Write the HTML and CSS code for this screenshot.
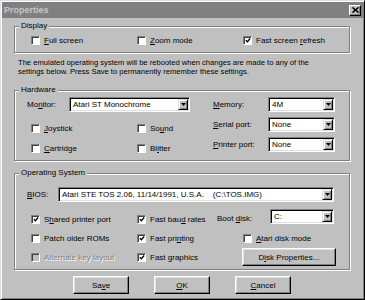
FILE: index.html
```html
<!DOCTYPE html>
<html lang="en">
<head>
  <meta charset="UTF-8">
  <title>Properties</title>
  <link rel="stylesheet" href="styles.css">
</head>
<body>
  <div class="window">
    <div class="titlebar">
      <span class="title">Properties</span>
      <button class="close-btn">
        <svg width="7" height="6" viewBox="0 0 7 6"><path d="M0.5 0.5L6.5 5.5M6.5 0.5L0.5 5.5" stroke="#000" stroke-width="1.6"/></svg>
      </button>
    </div>

    <div class="content">
      <fieldset class="group display">
        <legend>Display</legend>
        <div class="display-body">
          <label class="check"><span class="box"></span><span><u>F</u>ull screen</span></label>
          <label class="check"><span class="box"></span><span><u>Z</u>oom mode</span></label>
          <label class="check"><span class="box"><svg width="7" height="7" viewBox="0 0 7 7"><path d="M1 3.2L2.8 5L6 1.2" fill="none" stroke="#000" stroke-width="1.5"/></svg></span><span>Fast screen <u>r</u>efresh</span></label>
        </div>
      </fieldset>

      <p class="notice">The emulated operating system will be rebooted when changes are made to any of the<br>settings below. Press Save to permanently remember these settings.</p>

      <fieldset class="group hardware">
        <legend>Hardware</legend>
        <div class="hw-body">
          <div class="hw-left">
            <div class="monitor-row">
              <span class="monitor-label">Mo<u>n</u>itor:</span>
              <div class="select monitor-select">
                <span class="select-value">Atari ST Monochrome</span>
                <span class="select-arrow"><svg width="5" height="3" viewBox="0 0 5 3"><path d="M0 0H5L2.5 3Z" fill="#000"/></svg></span>
              </div>
            </div>
            <div class="hw-checks">
              <label class="check"><span class="box"></span><span><u>J</u>oystick</span></label>
              <label class="check"><span class="box"></span><span>So<u>u</u>nd</span></label>
              <label class="check"><span class="box"></span><span><u>C</u>artridge</span></label>
              <label class="check"><span class="box"></span><span>Bl<u>i</u>tter</span></label>
            </div>
          </div>
          <div class="hw-right">
            <span class="field-label"><u>M</u>emory:</span>
            <div class="select">
              <span class="select-value">4M</span>
              <span class="select-arrow"><svg width="5" height="3" viewBox="0 0 5 3"><path d="M0 0H5L2.5 3Z" fill="#000"/></svg></span>
            </div>
            <span class="field-label"><u>S</u>erial port:</span>
            <div class="select">
              <span class="select-value">None</span>
              <span class="select-arrow"><svg width="5" height="3" viewBox="0 0 5 3"><path d="M0 0H5L2.5 3Z" fill="#000"/></svg></span>
            </div>
            <span class="field-label"><u>P</u>rinter port:</span>
            <div class="select">
              <span class="select-value">None</span>
              <span class="select-arrow"><svg width="5" height="3" viewBox="0 0 5 3"><path d="M0 0H5L2.5 3Z" fill="#000"/></svg></span>
            </div>
          </div>
        </div>
      </fieldset>

      <fieldset class="group os">
        <legend>Operating System</legend>
        <div class="os-body">
          <div class="bios-row">
            <span class="bios-label"><u>B</u>IOS:</span>
            <div class="select bios-select">
              <span class="select-value">Atari STE TOS 2.06, 11/14/1991, U.S.A.&nbsp;&nbsp;&nbsp;&nbsp;(C:\TOS.IMG)</span>
              <span class="select-arrow"><svg width="5" height="3" viewBox="0 0 5 3"><path d="M0 0H5L2.5 3Z" fill="#000"/></svg></span>
            </div>
          </div>

          <div class="os-row row-boot">
            <label class="check col-a"><span class="box"><svg width="7" height="7" viewBox="0 0 7 7"><path d="M1 3.2L2.8 5L6 1.2" fill="none" stroke="#000" stroke-width="1.5"/></svg></span><span>S<u>h</u>ared printer port</span></label>
            <label class="check col-b-short"><span class="box"><svg width="7" height="7" viewBox="0 0 7 7"><path d="M1 3.2L2.8 5L6 1.2" fill="none" stroke="#000" stroke-width="1.5"/></svg></span><span>Fast bau<u>d</u> rates</span></label>
            <span class="boot-label">Boot <u>d</u>isk:</span>
            <div class="select boot-select">
              <span class="select-value">C:</span>
              <span class="select-arrow"><svg width="5" height="3" viewBox="0 0 5 3"><path d="M0 0H5L2.5 3Z" fill="#000"/></svg></span>
            </div>
          </div>

          <div class="os-row row-mid">
            <label class="check col-a"><span class="box"></span><span>Patch older ROMs</span></label>
            <label class="check col-b"><span class="box"><svg width="7" height="7" viewBox="0 0 7 7"><path d="M1 3.2L2.8 5L6 1.2" fill="none" stroke="#000" stroke-width="1.5"/></svg></span><span>Fast pri<u>n</u>ting</span></label>
            <label class="check"><span class="box"></span><span><u>A</u>tari disk mode</span></label>
          </div>

          <div class="os-row row-last">
            <label class="check col-a disabled"><span class="box"></span><span>Alternate key layout</span></label>
            <label class="check col-b-wide"><span class="box"><svg width="7" height="7" viewBox="0 0 7 7"><path d="M1 3.2L2.8 5L6 1.2" fill="none" stroke="#000" stroke-width="1.5"/></svg></span><span>Fast graphics</span></label>
            <button class="button disk-btn">D<u>i</u>sk Properties...</button>
          </div>
        </div>
      </fieldset>

      <div class="actions">
        <button class="button">Sa<u>v</u>e</button>
        <button class="button"><u>O</u>K</button>
        <button class="button"><u>C</u>ancel</button>
      </div>
    </div>
  </div>
</body>
</html>
```

FILE: styles.css
```css
body {
  margin: 0;
  font-family: "Liberation Sans", Arial, sans-serif;
  font-size: 8px;
  color: #000;
  background-color: #c0c0c0;
}

.window {
  width: 365px;
  height: 300px;
  box-sizing: border-box;
  padding: 1px;
  background-color: #c0c0c0;
  border: 1px solid;
  border-color: #dfdfdf #000 #000 #dfdfdf;
  box-shadow: inset 1px 1px #fff, inset -1px -1px #808080;
}

.titlebar {
  height: 16px;
  background-color: #808080;
  display: flex;
  align-items: center;
  justify-content: space-between;
}

.title {
  padding-left: 2px;
  font-size: 9px;
  font-weight: bold;
  color: #c8c8c8;
}

.close-btn {
  width: 12px;
  height: 11px;
  margin-right: 2px;
  padding: 0;
  box-sizing: border-box;
  display: flex;
  align-items: center;
  justify-content: center;
  background-color: #c0c0c0;
  border: 1px solid;
  border-color: #fff #000 #000 #fff;
  box-shadow: inset -1px -1px #808080;
}

.content {
  padding: 0 13px 0 12px;
}

/* etched group boxes */
.group {
  margin: 0;
  padding: 0;
  min-width: 0;
  border: 1px solid #808080;
  box-shadow: inset 1px 1px #fff, 1px 1px #fff;
}

.group legend {
  margin-left: 4px;
  padding: 0 2px;
  line-height: 10px;
  background-color: #c0c0c0;
}

.display {
  margin-top: 3px;
}

.display-body {
  display: grid;
  grid-template-columns: 106px 106px auto;
  padding: 4px 0 7px 16px;
}

.check {
  display: flex;
  align-items: center;
  height: 10px;
  white-space: nowrap;
}

.box {
  width: 9px;
  height: 9px;
  box-sizing: border-box;
  margin-right: 4px;
  flex-shrink: 0;
  display: flex;
  align-items: center;
  justify-content: center;
  background-color: #fff;
  border: 1px solid;
  border-color: #808080 #fff #fff #808080;
  box-shadow: inset 1px 1px #404040;
}

.box svg {
  margin: 1px 0 0 1px;
}

.check.disabled {
  color: #808080;
  text-shadow: 1px 1px #fff;
}

.check.disabled .box {
  background-color: #c0c0c0;
}

.notice {
  margin: 5px 4px 0;
  font-size: 7.6px;
  line-height: 9px;
  white-space: nowrap;
}

.hardware {
  margin-top: 9px;
}

.hw-body {
  display: flex;
  padding: 2px 0 7px 12px;
}

.hw-left {
  width: 163px;
}

.monitor-row {
  display: flex;
  align-items: center;
}

.monitor-label {
  width: 42px;
}

.monitor-select {
  width: 121px;
}

.hw-checks {
  display: grid;
  grid-template-columns: 106px auto;
  row-gap: 10px;
  margin-top: 11px;
  padding-left: 4px;
}

.hw-right {
  margin-left: 23px;
  display: grid;
  grid-template-columns: 55px 67px;
  grid-auto-rows: 15px;
  row-gap: 5px;
  align-items: center;
}

/* sunken combo boxes */
.select {
  height: 15px;
  box-sizing: border-box;
  padding: 1px;
  display: flex;
  align-items: center;
  background-color: #fff;
  border: 1px solid;
  border-color: #808080 #fff #fff #808080;
  box-shadow: inset 1px 1px #000, inset -1px -1px #dfdfdf;
}

.select-value {
  flex: 1;
  padding-left: 2px;
  white-space: nowrap;
  overflow: hidden;
}

.select-arrow {
  width: 10px;
  height: 11px;
  box-sizing: border-box;
  display: flex;
  align-items: center;
  justify-content: center;
  background-color: #c0c0c0;
  border: 1px solid;
  border-color: #dfdfdf #000 #000 #dfdfdf;
  box-shadow: inset 1px 1px #fff, inset -1px -1px #808080;
}

.os {
  margin-top: 7px;
}

.os-body {
  padding: 9px 0 3px 12px;
}

.bios-row {
  display: flex;
  align-items: center;
}

.bios-label {
  width: 31px;
}

.bios-select {
  width: 276px;
}

.os-row {
  display: flex;
  padding-left: 4px;
}

.row-boot {
  margin-top: 7px;
  height: 15px;
  align-items: flex-end;
}

.row-mid {
  margin-top: 9px;
  align-items: center;
}

.row-last {
  margin-top: 5px;
  height: 18px;
  align-items: center;
}

.col-a {
  width: 106px;
}

.col-b {
  width: 106px;
}

.col-b-short {
  width: 80px;
}

.col-b-wide {
  width: 105px;
}

.boot-label {
  width: 53px;
  line-height: 10px;
}

.boot-select {
  width: 64px;
}

/* raised push buttons */
.button {
  height: 18px;
  box-sizing: border-box;
  padding: 0;
  font: inherit;
  color: #000;
  background-color: #c0c0c0;
  border: 1px solid;
  border-color: #fff #000 #000 #fff;
  box-shadow: inset -1px -1px #808080, inset 1px 1px #dfdfdf;
}

.disk-btn {
  width: 94px;
}

.actions {
  display: flex;
  justify-content: center;
  gap: 25px;
  margin-top: 6px;
}

.actions .button {
  width: 56px;
}
```
